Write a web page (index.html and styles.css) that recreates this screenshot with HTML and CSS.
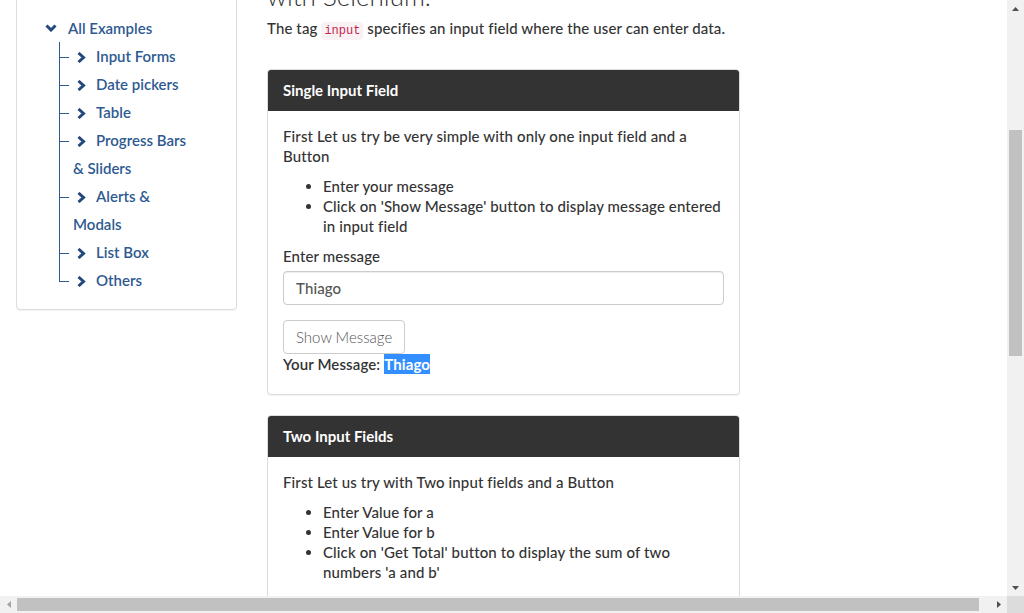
FILE: index.html
```html
<!DOCTYPE html>
<html lang="en">
<head>
<meta charset="utf-8">
<title>Selenium Easy Demo - Simple Form to Automate using Selenium</title>
<link rel="stylesheet" href="styles.css">
</head>
<body>
<div class="window">
  <div class="viewport" id="viewport">
    <div class="layout">
      <aside class="sidebar">
        <div class="side-panel">
          <ul class="tree">
            <li class="tree-root">
              <span class="root-line">
                <svg class="chev-down" width="12" height="8" viewBox="0 0 12 8"><polyline points="1.5,1.5 6,6 10.5,1.5" fill="none" stroke="#22497c" stroke-width="3"/></svg>
                <a href="#">All Examples</a>
              </span>
              <ul class="tree-children">
                <li><svg class="chev-right" width="9" height="11" viewBox="0 0 9 11"><polyline points="1.5,1 6.5,5.5 1.5,10" fill="none" stroke="#22497c" stroke-width="3"/></svg><a href="#">Input Forms</a></li>
                <li><svg class="chev-right" width="9" height="11" viewBox="0 0 9 11"><polyline points="1.5,1 6.5,5.5 1.5,10" fill="none" stroke="#22497c" stroke-width="3"/></svg><a href="#">Date pickers</a></li>
                <li><svg class="chev-right" width="9" height="11" viewBox="0 0 9 11"><polyline points="1.5,1 6.5,5.5 1.5,10" fill="none" stroke="#22497c" stroke-width="3"/></svg><a href="#">Table</a></li>
                <li><svg class="chev-right" width="9" height="11" viewBox="0 0 9 11"><polyline points="1.5,1 6.5,5.5 1.5,10" fill="none" stroke="#22497c" stroke-width="3"/></svg><a href="#">Progress Bars &amp; Sliders</a></li>
                <li><svg class="chev-right" width="9" height="11" viewBox="0 0 9 11"><polyline points="1.5,1 6.5,5.5 1.5,10" fill="none" stroke="#22497c" stroke-width="3"/></svg><a href="#">Alerts &amp; Modals</a></li>
                <li><svg class="chev-right" width="9" height="11" viewBox="0 0 9 11"><polyline points="1.5,1 6.5,5.5 1.5,10" fill="none" stroke="#22497c" stroke-width="3"/></svg><a href="#">List Box</a></li>
                <li><svg class="chev-right" width="9" height="11" viewBox="0 0 9 11"><polyline points="1.5,1 6.5,5.5 1.5,10" fill="none" stroke="#22497c" stroke-width="3"/></svg><a href="#">Others</a></li>
              </ul>
            </li>
          </ul>
        </div>
      </aside>

      <main class="main">
        <h3 class="lead-title">This would be your first example to start<br>with Selenium.</h3>
        <p class="intro">The tag <code>input</code> specifies an input field where the user can enter data.</p>

        <section class="panel">
          <div class="panel-heading">Single Input Field</div>
          <div class="panel-body">
            <p>First Let us try be very simple with only one input field and a Button</p>
            <ul class="steps">
              <li>Enter your message</li>
              <li>Click on 'Show Message' button to display message entered in input field</li>
            </ul>
            <label class="field-label" for="user-message">Enter message</label>
            <input class="form-control" id="user-message" type="text" value="Thiago">
            <button class="btn" type="button">Show Message</button>
            <div class="result">Your Message: <span class="selected">Thiago</span></div>
          </div>
        </section>

        <section class="panel">
          <div class="panel-heading">Two Input Fields</div>
          <div class="panel-body">
            <p>First Let us try with Two input fields and a Button</p>
            <ul class="steps">
              <li>Enter Value for a</li>
              <li>Enter Value for b</li>
              <li>Click on 'Get Total' button to display the sum of two numbers 'a and b'</li>
            </ul>
          </div>
        </section>
      </main>
    </div>
  </div>

  <div class="vscroll">
    <div class="sb-btn"><svg width="7" height="4" viewBox="0 0 7 4"><polygon points="0,4 3.5,0 7,4" fill="#505050"/></svg></div>
    <div class="vtrack"><div class="vthumb"></div></div>
    <div class="sb-btn"><svg width="7" height="4" viewBox="0 0 7 4"><polygon points="0,0 7,0 3.5,4" fill="#505050"/></svg></div>
  </div>

  <div class="hscroll">
    <div class="sb-btn"><svg width="4" height="7" viewBox="0 0 4 7"><polygon points="4,0 4,7 0,3.5" fill="#a3a3a3"/></svg></div>
    <div class="htrack"><div class="hthumb"></div></div>
    <div class="sb-btn"><svg width="4" height="7" viewBox="0 0 4 7"><polygon points="0,0 4,3.5 0,7" fill="#505050"/></svg></div>
  </div>

  <div class="sb-corner"></div>
</div>
<script src="script.js"></script>
</body>
</html>
```

FILE: styles.css
```css
* { box-sizing: border-box; }

html, body {
  margin: 0;
  padding: 0;
  overflow: hidden;
}

body {
  font-family: "Lato", "Open Sans", sans-serif;
  font-size: 15px;
  font-weight: 500;
  letter-spacing: 0.12px;
  line-height: 20px;
  color: #333;
  background: #fff;
}

/* Browser window: page area + classic scrollbars */
.window {
  display: grid;
  grid-template-columns: 1007px 17px;
  grid-template-rows: 596px 17px;
  width: 1024px;
  height: 613px;
}

.viewport {
  overflow: hidden;
  background: #fff;
}

.vscroll {
  display: flex;
  flex-direction: column;
  background: #f1f1f1;
}

.hscroll {
  display: flex;
  background: #f1f1f1;
}

.sb-btn {
  flex: 0 0 17px;
  height: 17px;
  display: flex;
  align-items: center;
  justify-content: center;
}

.hscroll .sb-btn {
  width: 17px;
}

.vtrack {
  flex: 1;
  padding-top: 113px;
}

.vthumb {
  height: 226px;
  margin: 0 2px;
  background: #c1c1c1;
}

.htrack {
  flex: 1;
  padding: 2px 0;
}

.hthumb {
  width: 962px;
  height: 13px;
  background: #c1c1c1;
}

.sb-corner {
  background: #dcdcdc;
}

/* Page layout */
.layout {
  display: grid;
  grid-template-columns: 221px 473px;
  column-gap: 30px;
  padding-left: 16px;
  align-items: start;
}

/* Sidebar */
.side-panel {
  border: 1px solid #ddd;
  border-radius: 4px;
  box-shadow: 0 1px 1px rgba(0, 0, 0, 0.05);
  background: #fff;
  padding: 68px 0 15px;
}

.tree {
  list-style: none;
  margin: 0;
  padding: 0 0 0 28px;
  font-size: 15px;
  font-weight: 600;
  letter-spacing: 0;
}

.tree a {
  color: #2e5a91;
  text-decoration: none;
}

.root-line {
  display: flex;
  align-items: center;
  height: 28px;
}

.chev-down {
  display: block;
  margin-right: 11px;
}

.tree-children {
  list-style: none;
  margin: 0;
  padding: 0 0 0 28px;
  width: 155px;
}

.tree-children li {
  position: relative;
  line-height: 28px;
}

.tree-children li::before {
  content: "";
  position: absolute;
  left: -14px;
  top: 0;
  width: 9px;
  height: 15px;
  border-left: 1px solid #2e5a91;
  border-bottom: 1px solid #2e5a91;
}

.tree-children li:not(:last-child)::after {
  content: "";
  position: absolute;
  left: -14px;
  top: 15px;
  bottom: 0;
  border-left: 1px solid #2e5a91;
}

.chev-right {
  display: inline-block;
  vertical-align: -1px;
  margin: 0 10px 0 4px;
}

/* Main column */
.lead-title {
  margin: 0 0 5px;
  font-size: 26px;
  line-height: 34px;
  font-weight: 300;
  letter-spacing: 0;
  white-space: nowrap;
  color: #333;
}

.intro {
  margin: 0 0 31px;
}

code {
  font-family: "Liberation Mono", monospace;
  font-size: 12px;
  line-height: 1;
  letter-spacing: 0;
  padding: 2px 3px;
  color: #c7254e;
  background: #f9f2f4;
  border-radius: 4px;
}

.panel {
  border: 1px solid #ddd;
  border-radius: 4px;
  box-shadow: 0 1px 1px rgba(0, 0, 0, 0.05);
  margin-bottom: 20px;
  background: #fff;
}

.panel-heading {
  background: #333;
  color: #fff;
  font-weight: 700;
  letter-spacing: 0;
  padding: 10px 15px;
  line-height: 21px;
  border-radius: 3px 3px 0 0;
}

.panel-body {
  padding: 15px 15px 20px;
}

.panel-body p {
  margin: 0 0 10px;
}

.steps {
  margin: 0 0 10px;
  padding-left: 40px;
}

.field-label {
  display: block;
  margin-bottom: 5px;
}

.form-control {
  display: block;
  width: 100%;
  height: 34px;
  padding: 6px 12px;
  font: inherit;
  letter-spacing: inherit;
  color: #555;
  background: #fff;
  border: 1px solid #ccc;
  border-radius: 4px;
  box-shadow: inset 0 1px 1px rgba(0, 0, 0, 0.075);
}

.btn {
  display: block;
  height: 34px;
  margin-top: 15px;
  padding: 6px 12px;
  font-family: inherit;
  font-size: 15px;
  font-weight: 300;
  letter-spacing: 0;
  color: #555;
  background: #fff;
  border: 1px solid #ccc;
  border-radius: 4px;
}

.result {
  font-weight: 600;
}

.selected {
  display: inline-block;
  line-height: 20px;
  background: #338fff;
  color: #fff;
  font-weight: 700;
}
```

FILE: script.js
```js
(function () {
  var viewport = document.getElementById('viewport');
  function place() {
    viewport.scrollTop = 55;
  }
  place();
  window.addEventListener('load', place);
})();
```
